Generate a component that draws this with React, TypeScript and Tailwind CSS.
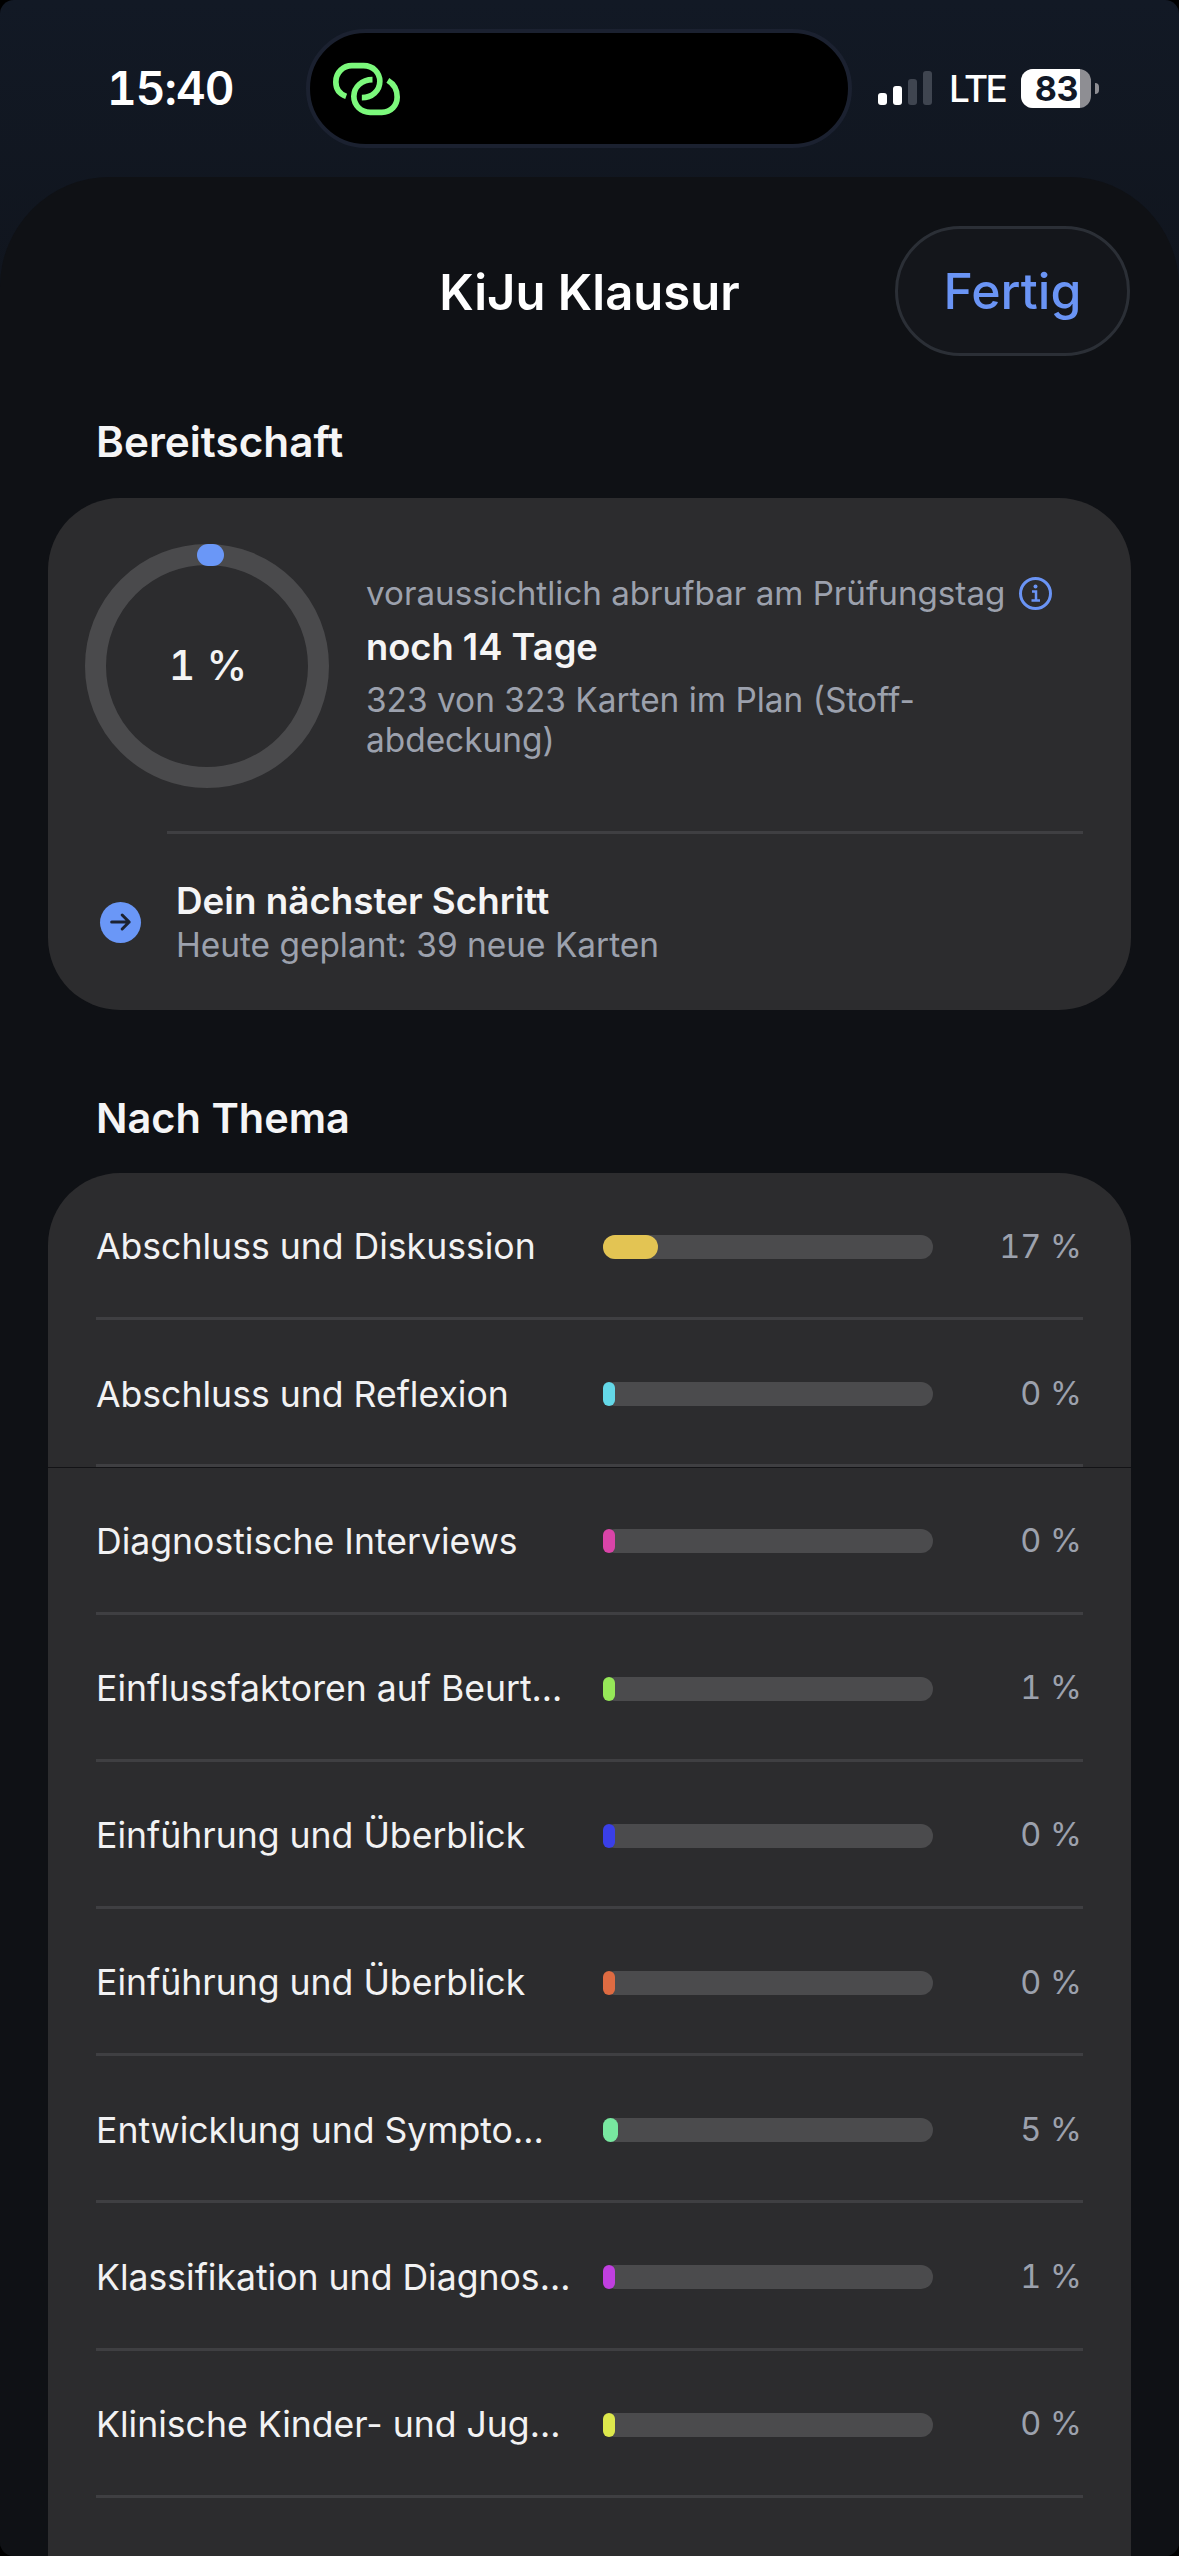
import React from 'react';

const topics = [
  { name: 'Abschluss und Diskussion', pct: '17 %', fill: 'w-[55px] bg-[#e3c453]' },
  { name: 'Abschluss und Reflexion', pct: '0 %', fill: 'w-[12px] bg-[#64d8e8]' },
  { name: 'Diagnostische Interviews', pct: '0 %', fill: 'w-[12px] bg-[#d944a8]' },
  { name: 'Einflussfaktoren auf Beurt...', pct: '1 %', fill: 'w-[12px] bg-[#96e858]' },
  { name: 'Einführung und Überblick', pct: '0 %', fill: 'w-[12px] bg-[#3a3fe8]' },
  { name: 'Einführung und Überblick', pct: '0 %', fill: 'w-[12px] bg-[#de6b42]' },
  { name: 'Entwicklung und Sympto...', pct: '5 %', fill: 'w-[15px] bg-[#78e8a0]' },
  { name: 'Klassifikation und Diagnos...', pct: '1 %', fill: 'w-[12px] bg-[#c03fe0]' },
  { name: 'Klinische Kinder- und Jug...', pct: '0 %', fill: 'w-[12px] bg-[#dde84c]' },
];

function LinkLogo() {
  return (
    <svg viewBox="95 119 218 174" className="w-[73px] h-[58px] ml-[20px]" fill="none" stroke="#7cf97c" strokeWidth="17">
      <path d="M143 228 C120 220 112 205 112 185 C112 155 135 136 160 136 H195 C225 136 244 158 244 183 C244 212 220 232 190 232" />
      <path d="M222 178 C190 178 166 200 166 228 C166 255 188 276 215 276 H250 C278 276 296 255 296 230 C296 208 285 190 268 180" />
    </svg>
  );
}

function StatusBar() {
  return (
    <div className="h-[177px] pt-[29px] flex items-start text-white">
      <div className="w-[306px] h-[119px] pl-[107px] flex items-center text-[46px] font-semibold tabular-nums tracking-[-1px]">15:40</div>
      <div className="w-[546px] h-[119px] rounded-full bg-black border-[4px] border-[#1b2130] flex items-center">
        <LinkLogo />
      </div>
      <div className="h-[119px] pl-[26px] flex items-center">
        <div className="flex items-end gap-[6px] h-[34px] mt-[-1px]">
          <div className="w-[9px] h-[12px] rounded-[3px] bg-white" />
          <div className="w-[9px] h-[19px] rounded-[3px] bg-white" />
          <div className="w-[9px] h-[26px] rounded-[3px] bg-[#3f4550]" />
          <div className="w-[9px] h-[34px] rounded-[3px] bg-[#3f4550]" />
        </div>
        <div className="ml-[17px] text-[37px] font-medium leading-none tracking-[-2.5px]">LTE</div>
        <div className="ml-[16px] w-[70px] h-[39px] rounded-[12px] overflow-hidden bg-[#8e8e93] relative">
          <div className="w-[59px] h-full bg-white" />
          <div className="absolute inset-0 flex items-center justify-center text-[34px] font-bold text-[#111827] tracking-[-0.5px]">83</div>
        </div>
        <div className="ml-[4px] w-[4px] h-[11px] rounded-r-full bg-[#8e8e93]" />
      </div>
    </div>
  );
}

function Ring() {
  return (
    <div className="relative w-[244px] h-[244px] shrink-0 rounded-full border-[21px] border-[#4a4a4c] flex items-center justify-center">
      <div className="absolute top-[-21px] left-[91px] w-[27px] h-[22px] rounded-full bg-[#6a97f7]" />
      <span className="pl-[2px] text-[41px] font-medium text-[#f4f4f5] tabular-nums">1 %</span>
    </div>
  );
}

function TopicRow({ name, pct, fill }: { name: string; pct: string; fill: string }) {
  return (
    <div className="h-[147.2px] ml-[48px] mr-[48px] pt-[4px] border-b-[3px] border-[#3f3f42] flex items-center">
      <div className="w-[507px] text-[35.6px] text-[#f2f2f3] whitespace-nowrap">{name}</div>
      <div className="w-[330px] h-[24px] rounded-[12px] bg-[#4b4b4d]">
        <div className={`h-full rounded-full ${fill}`} />
      </div>
      <div className="flex-1 pr-[1px] text-right text-[32.5px] text-[#9ca1ad] tabular-nums">{pct}</div>
    </div>
  );
}

export default function App() {
  return (
    <div className="w-[1179px] h-[2556px] bg-black relative overflow-hidden font-['Inter',sans-serif]">
      <div className="h-full rounded-[14px] overflow-hidden bg-gradient-to-b from-[#121925] via-[#0f1218] via-20% to-[#0f1115] flex flex-col">
        <StatusBar />

        <div className="flex-1 flex flex-col rounded-t-[110px] bg-[#0f1115]">
          {/* Header */}
          <div className="mt-[49px] grid grid-cols-[1fr_auto_1fr] items-center">
            <div />
            <div className="pt-[3px] text-[49px] font-semibold text-white">KiJu Klausur</div>
            <div className="flex justify-end pr-[49px]">
              <div className="w-[235px] h-[130px] rounded-[65px] border-[3px] border-[#2b2f36] bg-[#14161b] flex items-center justify-center text-[50px] font-medium text-[#6a94f5]">
                Fertig
              </div>
            </div>
          </div>

          <div className="mt-[62px] ml-[96px] text-[42.3px] leading-[48px] font-semibold text-[#f5f5f6]">Bereitschaft</div>

          <div className="mt-[32px] mx-[48px] h-[512px] rounded-[72px] bg-[#2c2c2e] pt-[46px]">
            <div className="flex pl-[37px] gap-[37px]">
              <Ring />
              <div className="pt-[29px]">
                <div className="flex items-center gap-[14px] text-[33.2px] leading-[40px] text-[#9ca1ad] whitespace-nowrap">
                  voraussichtlich abrufbar am Prüfungstag
                  <svg viewBox="0 0 33 33" className="w-[33px] h-[33px]" fill="none" stroke="#6a94f5" strokeWidth="3">
                    <circle cx="16.5" cy="16.5" r="15" />
                    <path d="M13 14.5h4v9M12.5 23.5h8.5" strokeWidth="2.5" />
                    <circle cx="16.5" cy="9.5" r="2" fill="#6a94f5" stroke="none" />
                  </svg>
                </div>
                <div className="mt-[12px] text-[36.3px] leading-[44px] font-semibold text-[#f5f5f6]">noch 14 Tage</div>
                <div className="mt-[11px] w-[600px] text-[33.4px] leading-[40px] text-[#9ca1ad]">
                  323 von 323 Karten im Plan (Stoff-
                  <br />
                  abdeckung)
                </div>
              </div>
            </div>

            <div className="mt-[43px] ml-[119px] mr-[48px] h-[3px] bg-[#3f3f42]" />

            <div className="mt-[45px] pl-[52px] flex items-center gap-[35px]">
              <div className="w-[41px] h-[41px] rounded-full bg-[#6a97f7] flex items-center justify-center">
                <svg viewBox="0 0 24 24" className="w-[28px] h-[28px]" fill="none" stroke="#1c2230" strokeWidth="2.6" strokeLinecap="round" strokeLinejoin="round">
                  <path d="M4 12h15M13 6l6 6-6 6" />
                </svg>
              </div>
              <div>
                <div className="text-[36.8px] leading-[44px] font-semibold text-[#f5f5f6]">Dein nächster Schritt</div>
                <div className="mt-[2px] text-[33.4px] leading-[40px] text-[#9ca1ad]">Heute geplant: 39 neue Karten</div>
              </div>
            </div>
          </div>

          <div className="mt-[84px] ml-[96px] text-[41.5px] leading-[48px] font-semibold text-[#f5f5f6]">Nach Thema</div>

          <div className="mt-[31px] mx-[48px] flex-1 rounded-t-[72px] bg-[#2c2c2e]">
            {topics.map((t, i) => (
              <TopicRow key={i} name={t.name} pct={t.pct} fill={t.fill} />
            ))}
          </div>
        </div>
      </div>
      {/* thin seam that crosses the card */}
      <div className="absolute top-[1467px] left-[48px] w-[1083px] h-[1px] bg-[#131316]" />
    </div>
  );
}
